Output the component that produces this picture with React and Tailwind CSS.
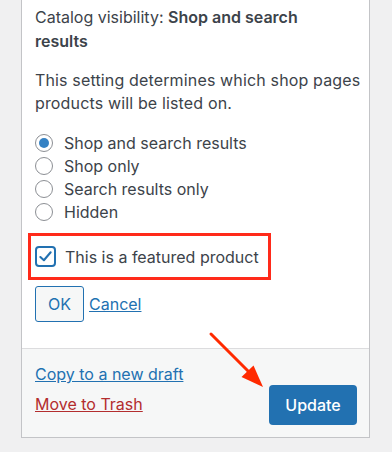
export default function App() {
  const options = ['Shop and search results', 'Shop only', 'Search results only', 'Hidden']

  return (
    <div className="h-[452px] overflow-hidden bg-[#f0f0f1] pl-[21px] pr-[22px] text-[16px] text-[#3c434a] [font-family:Inter,'Liberation_Sans',sans-serif]">
      <div className="relative border-x border-b border-[#c3c4c7] bg-white">
        <div className="pl-[13px] pr-[6px] pt-[5px] pb-[26px]">
          <p className="max-w-[300px] leading-[24px]">
            Catalog visibility: <b className="font-semibold">Shop and search</b> <b className="font-semibold">results</b>
          </p>
          <p className="mt-[16px] leading-[23px] tracking-[0.15px]">
            This setting determines which shop pages products will be listed on.
          </p>

          <ul className="mt-[16px] flex flex-col">
            {options.map((o, i) => (
              <li key={o} className="flex h-[23px] items-center gap-[11px]">
                <span className="flex h-[18px] w-[18px] items-center justify-center rounded-full border border-[#8c8f94] bg-white">
                  {i === 0 && <span className="h-[10px] w-[10px] rounded-full bg-[#3582c4]" />}
                </span>
                <span>{o}</span>
              </li>
            ))}
          </ul>

          <div className="ml-[-7px] mt-[10px] flex h-[47px] w-[243px] items-center gap-[9px] border-[3px] border-[#ff2a1a] pl-[4px]">
            <span className="flex h-[21px] w-[21px] items-center justify-center rounded-[4px] border-2 border-[#2271b1]">
              <svg width="15" height="15" viewBox="0 0 16 16" fill="none">
                <path d="M2.5 8.5 L6.3 12 L13.5 3.5" stroke="#2271b1" strokeWidth="2.2" strokeLinecap="round" strokeLinejoin="round" />
              </svg>
            </span>
            <span>This is a featured product</span>
          </div>

          <div className="mt-[6px] flex items-center gap-[5px]">
            <button className="h-[36px] w-[49px] rounded-[3px] border border-[#2271b1] bg-[#f6f7f7] text-[16px] text-[#2271b1]">
              OK
            </button>
            <a href="#" className="text-[#2271b1] underline">Cancel</a>
          </div>
        </div>

        <div className="flex items-end justify-between border-t border-[#dcdcde] bg-[#f6f7f7] pl-[13px] pr-[12px] pt-[14px] pb-[12px]">
          <div className="flex flex-col gap-[7px] pb-[9px] leading-[23px]">
            <a href="#" className="text-[#2271b1] underline">Copy to a new draft</a>
            <a href="#" className="text-[#b32d2e] underline">Move to Trash</a>
          </div>
          <button className="h-[40px] w-[88px] rounded-[4px] bg-[#2271b1] text-[16px] font-medium text-white">
            Update
          </button>
        </div>

        <svg className="absolute left-[179px] top-[326px]" width="70" height="66" viewBox="0 0 70 66">
          <line x1="10" y1="8" x2="48" y2="46" stroke="#ff2a00" strokeWidth="3" strokeLinecap="round" />
          <polygon points="62,61 40.5,51 52.5,39.5" fill="#ff2a00" />
        </svg>
      </div>
    </div>
  )
}
